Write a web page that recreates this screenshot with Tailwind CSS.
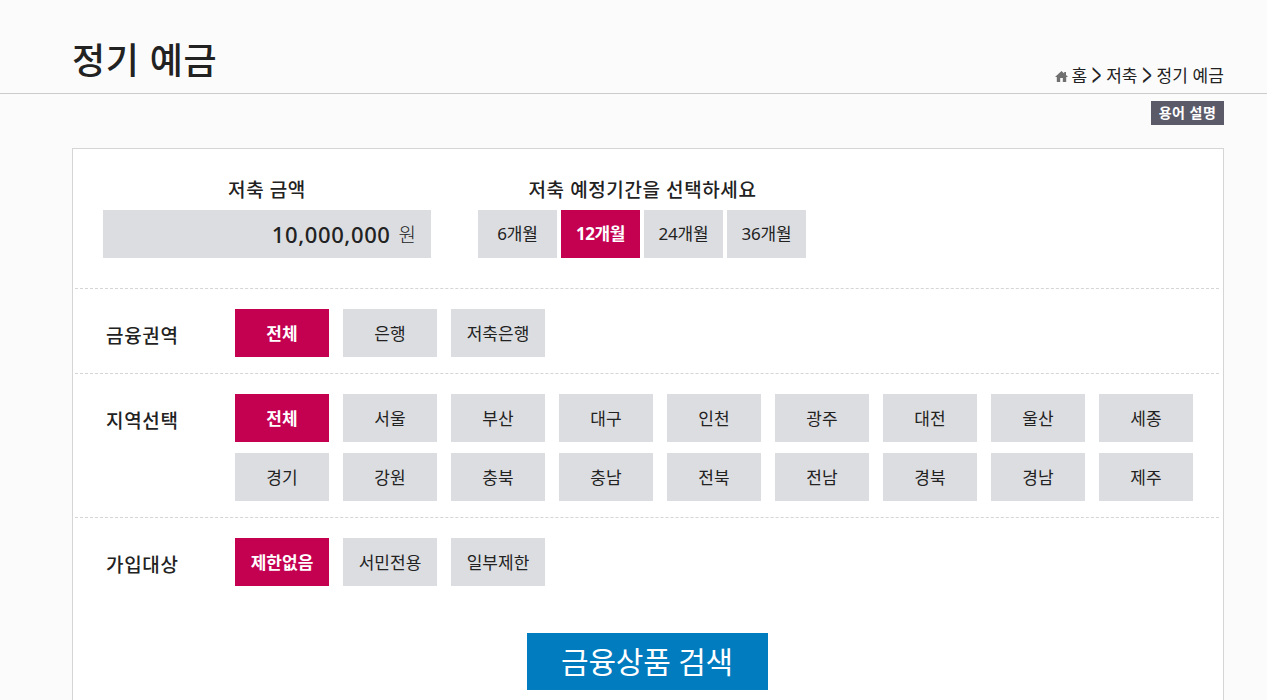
<!DOCTYPE html>
<html lang="ko">
<head>
  <meta charset="UTF-8">
  <meta name="viewport" content="width=device-width, initial-scale=1.0">
  <title>정기 예금</title>
  <script src="https://cdn.jsdelivr.net/npm/@tailwindcss/browser@4"></script>
</head>
<body class="bg-[#fbfbfb] text-[#222] h-screen overflow-hidden flex flex-col font-['Noto_Sans','Noto_Sans_CJK_KR',sans-serif]">

  <!-- Header -->
  <header class="h-[94px] shrink-0 border-b border-[#ccc] pl-[72px] pr-[43px] flex justify-between items-end">
    <h1 class="text-[36px] leading-[48px] tracking-[0.7px] font-medium pb-2">정기 예금</h1>
    <nav class="flex items-center text-[17px] leading-6 pb-[5px]">
      <svg class="w-[13px] h-[11px] mr-1" viewBox="0 0 13 11" fill="#707070"><path d="M6.5 0 0 6h1.8v5h3.4V7h2.6v4h3.4V6H13l-2-1.9V1H9.2v1.4z"/></svg>
      <span>홈</span>
      <span class="w-[19px] text-center scale-y-190">&gt;</span>
      <span>저축</span>
      <span class="w-[19px] text-center scale-y-190">&gt;</span>
      <span class="tracking-[0.1px]">정기 예금</span>
    </nav>
  </header>

  <div class="shrink-0 flex justify-end pr-[43px] pt-[7px]">
    <a href="#" class="w-[73px] h-6 bg-[#5b5a69] text-white text-[14px] leading-6 tracking-[0.5px] font-bold text-center">용어 설명</a>
  </div>

  <main class="mt-[23px] ml-[72px] w-[1152px] flex-1 min-h-0 bg-white border border-b-0 border-[#d5d5d5] pl-[2px] pr-1">
    <!-- 금액 / 기간 -->
    <section class="h-[140px] pt-[29px] pl-7 flex gap-[47px] border-b border-dashed border-[#d5d5d5]">
      <div class="w-[328px]">
        <h2 class="text-[19px] leading-6 tracking-[0.6px] mb-2 font-medium text-center">저축 금액</h2>
        <div class="h-12 bg-[#dcdde1] flex items-center justify-end pr-[15px]">
          <span class="text-[22px] leading-8 tracking-[0.6px] font-medium pb-px">10,000,000</span>
          <span class="text-[19px] font-light ml-2 pt-[3px]">원</span>
        </div>
      </div>
      <div class="w-[328px]">
        <h2 class="text-[19px] leading-6 tracking-[0.6px] mb-2 pl-px font-medium text-center whitespace-nowrap">저축 예정기간을 선택하세요</h2>
        <div class="grid grid-cols-4 gap-1 text-[17px] tracking-[-0.2px] leading-12 text-center">
          <button class="h-12 bg-[#dcdde1]">6개월</button>
          <button class="h-12 bg-[#c40051] text-white font-bold tracking-[-0.4px]">12개월</button>
          <button class="h-12 bg-[#dcdde1]">24개월</button>
          <button class="h-12 bg-[#dcdde1]">36개월</button>
        </div>
      </div>
    </section>

    <!-- 금융권역 -->
    <section class="h-[85px] pt-5 pl-[31px] flex border-b border-dashed border-[#d5d5d5]">
      <h2 class="w-[129px] pt-[15px] text-[19px] leading-6 tracking-[0.7px] font-medium">금융권역</h2>
      <div class="flex gap-[14px] text-[17px] leading-[50px]">
        <button class="w-[94px] h-12 bg-[#c40051] text-white font-bold">전체</button>
        <button class="w-[94px] h-12 bg-[#dcdde1]">은행</button>
        <button class="w-[94px] h-12 bg-[#dcdde1]">저축은행</button>
      </div>
    </section>

    <!-- 지역선택 -->
    <section class="h-[144px] pt-5 pl-[31px] flex border-b border-dashed border-[#d5d5d5]">
      <h2 class="w-[129px] pt-[15px] text-[19px] leading-6 tracking-[0.7px] font-medium">지역선택</h2>
      <div class="grid grid-cols-[repeat(9,94px)] gap-x-[14px] gap-y-[11px] content-start text-[17px] leading-[50px]">
        <button class="h-12 bg-[#c40051] text-white font-bold">전체</button>
        <button class="h-12 bg-[#dcdde1]">서울</button>
        <button class="h-12 bg-[#dcdde1]">부산</button>
        <button class="h-12 bg-[#dcdde1]">대구</button>
        <button class="h-12 bg-[#dcdde1]">인천</button>
        <button class="h-12 bg-[#dcdde1]">광주</button>
        <button class="h-12 bg-[#dcdde1]">대전</button>
        <button class="h-12 bg-[#dcdde1]">울산</button>
        <button class="h-12 bg-[#dcdde1]">세종</button>
        <button class="h-12 bg-[#dcdde1]">경기</button>
        <button class="h-12 bg-[#dcdde1]">강원</button>
        <button class="h-12 bg-[#dcdde1]">충북</button>
        <button class="h-12 bg-[#dcdde1]">충남</button>
        <button class="h-12 bg-[#dcdde1]">전북</button>
        <button class="h-12 bg-[#dcdde1]">전남</button>
        <button class="h-12 bg-[#dcdde1]">경북</button>
        <button class="h-12 bg-[#dcdde1]">경남</button>
        <button class="h-12 bg-[#dcdde1]">제주</button>
      </div>
    </section>

    <!-- 가입대상 -->
    <section class="pt-5 pl-[31px] flex">
      <h2 class="w-[129px] pt-[15px] text-[19px] leading-6 tracking-[0.7px] font-medium">가입대상</h2>
      <div class="flex gap-[14px] text-[17px] leading-[50px]">
        <button class="w-[94px] h-12 bg-[#c40051] text-white font-bold">제한없음</button>
        <button class="w-[94px] h-12 bg-[#dcdde1]">서민전용</button>
        <button class="w-[94px] h-12 bg-[#dcdde1]">일부제한</button>
      </div>
    </section>

    <button class="block mt-[47px] mx-auto w-[241px] h-[57px] bg-[#007cbf] text-white text-[30px] leading-[57px] tracking-[-0.2px]">금융상품 검색</button>
  </main>
</body>
</html>
